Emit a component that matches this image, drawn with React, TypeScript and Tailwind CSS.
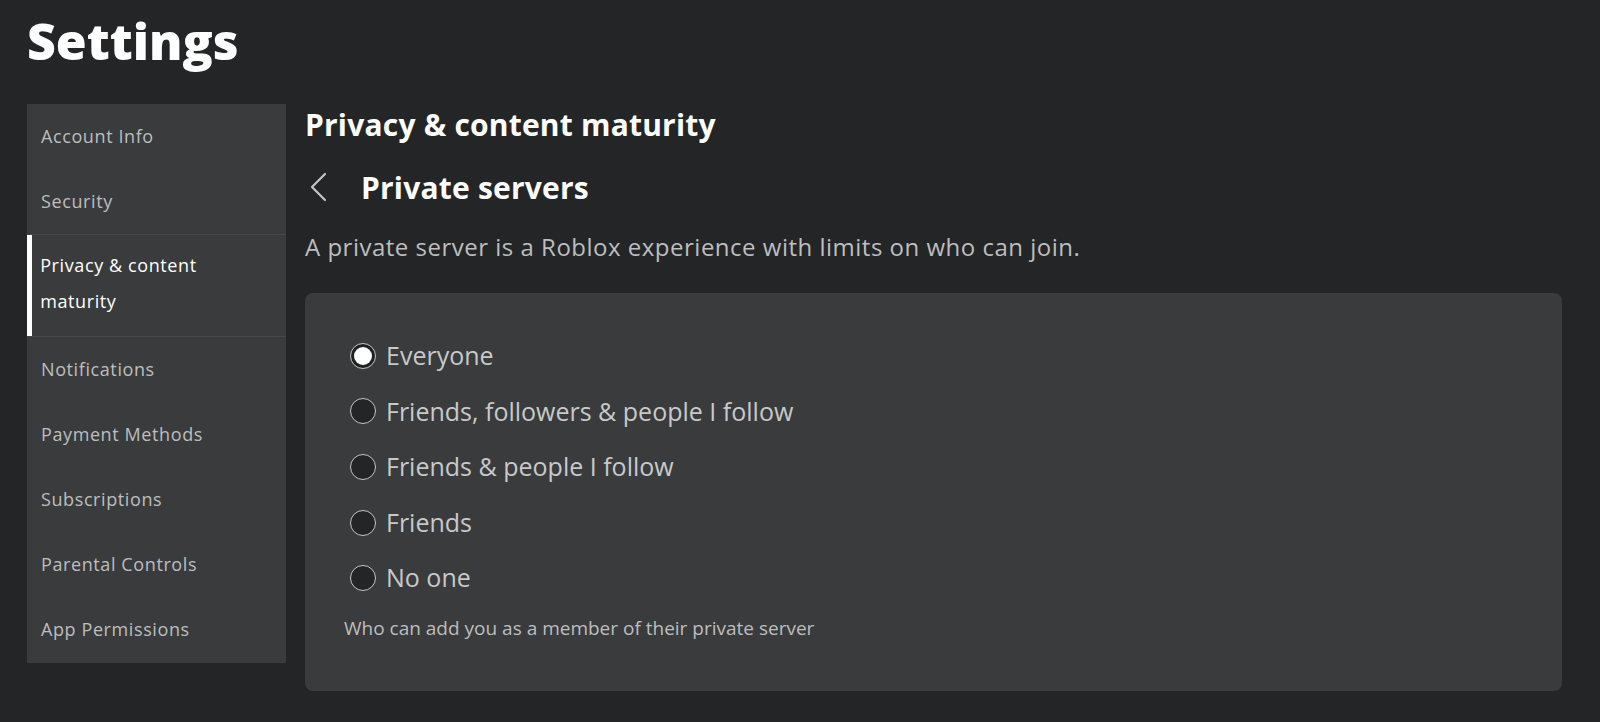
const navItems = [
  "Account Info",
  "Security",
  "Privacy & content maturity",
  "Notifications",
  "Payment Methods",
  "Subscriptions",
  "Parental Controls",
  "App Permissions",
];

const options = [
  "Everyone",
  "Friends, followers & people I follow",
  "Friends & people I follow",
  "Friends",
  "No one",
];

function Radio({ checked }: { checked: boolean }) {
  if (checked) {
    return (
      <span className="w-[26px] h-[26px] shrink-0 rounded-full border border-[#c4c5c6] bg-[#1f2123] flex items-center justify-center">
        <span className="w-[18px] h-[18px] rounded-full bg-white" />
      </span>
    );
  }
  return <span className="w-[26px] h-[26px] shrink-0 rounded-full border border-[#c4c5c6] bg-[#232527]" />;
}

export default function App() {
  return (
    <div className="w-screen h-screen overflow-hidden bg-[#232527] font-['Open_Sans',sans-serif] text-[#bdbebe]">
      <div className="pl-[27px] pr-[38px]">
        <h1 className="h-[104px] pt-[13px] text-[50px] leading-[56px] font-extrabold text-white">
          Settings
        </h1>

        <div className="flex gap-[19px]">
          <nav className="w-[259px] shrink-0 h-[559px] bg-[#393b3d] flex flex-col">
            {navItems.map((item, i) =>
              i === 2 ? (
                <div
                  key={item}
                  className="h-[103px] flex border-y border-[#45484a]"
                >
                  <div className="w-[6px] bg-white" />
                  <div className="pl-[8px] pt-[12px] pr-[40px] text-[18px] tracking-[0.6px] leading-[36px] text-white">
                    {item}
                  </div>
                </div>
              ) : (
                <div key={item} className="h-[65px] flex items-center pl-[14px] text-[18px] tracking-[0.6px]">
                  {item}
                </div>
              )
            )}
          </nav>

          <main className="flex-1">
            <h2 className="h-[54px] pt-[3px] text-[30px] tracking-[0.2px] leading-[36px] font-bold text-white">
              Privacy &amp; content maturity
            </h2>
            <div className="h-[58px] flex items-center gap-[30px]">
              <svg width="24" height="32" viewBox="0 0 24 32" className="ml-[2px]">
                <path d="M18 3 L5 16 L18 29" fill="none" stroke="#c4c5c6" strokeWidth="2.2" strokeLinecap="round" strokeLinejoin="round" />
              </svg>
              <span className="text-[30px] tracking-[0.2px] font-bold text-white">Private servers</span>
            </div>
            <p className="h-[77px] pt-[11px] text-[24px] tracking-[0.5px] leading-[40px] text-[#bdbebe]">
              A private server is a Roblox experience with limits on who can join.
            </p>
            <section className="h-[398px] rounded-[8px] bg-[#393b3d] pt-[35px] pl-[39px]">
              <div className="flex flex-col pl-[6px]">
                {options.map((opt, i) => (
                  <label key={opt} className="h-[55.6px] flex items-center gap-[10px]">
                    <Radio checked={i === 0} />
                    <span className="text-[25px] text-[#c8c9ca]">{opt}</span>
                  </label>
                ))}
              </div>
              <p className="mt-[8px] text-[19px] leading-[28px] text-[#bdbebe]">
                Who can add you as a member of their private server
              </p>
            </section>
          </main>
        </div>
      </div>
    </div>
  );
}
